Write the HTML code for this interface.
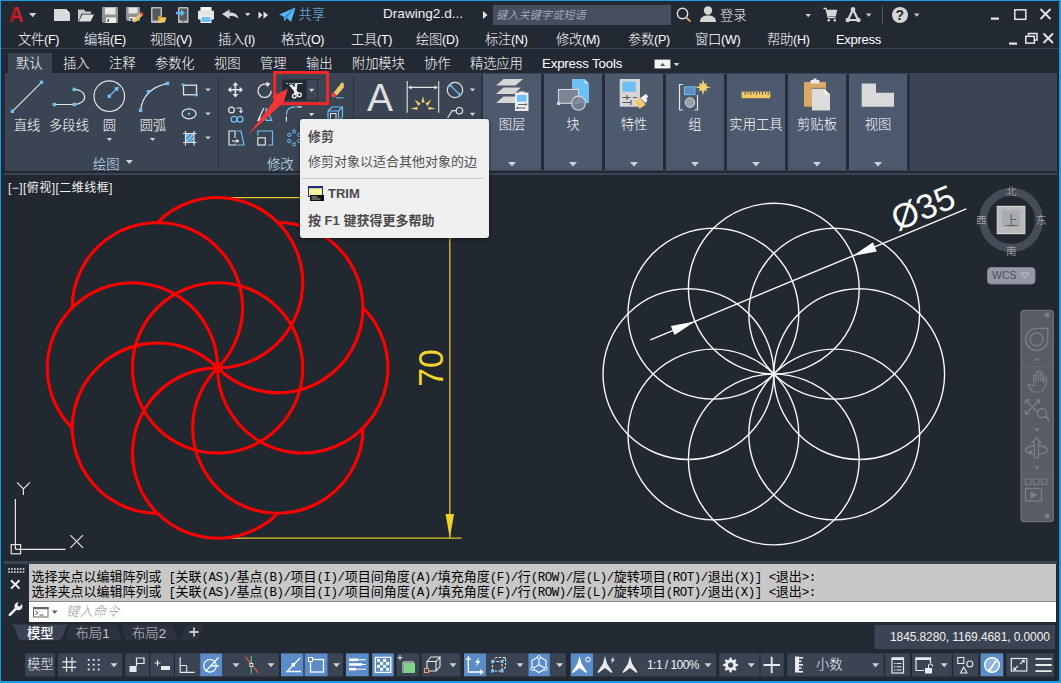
<!DOCTYPE html>
<html lang="zh-CN"><head><meta charset="utf-8"><title>Drawing2.dwg</title>
<style>
*{box-sizing:border-box;margin:0;padding:0}
html,body{width:1061px;height:683px;overflow:hidden;background:#222933}
body{position:relative;font-family:"Liberation Sans","Noto Sans CJK SC",sans-serif;color:#eef0f2;font-size:14px;font-weight:300}
.abs{position:absolute}
.t{position:absolute;white-space:nowrap;line-height:1}
#bord{position:absolute;left:0;top:0;width:1061px;height:683px;border:1px solid #1c9be0;border-right-width:2px;border-bottom-width:2px;z-index:50;pointer-events:none}
svg{position:absolute;left:0;top:0;overflow:visible}
.menu i{font-style:normal;font-size:12.5px}
.menu .t{font-size:13.33px;top:32.5px;color:#fff;font-weight:300;letter-spacing:-0.3px}
.tabs .t{font-size:13.33px;top:57px;color:#fff;letter-spacing:-0.2px;font-weight:300}
.rl{font-size:13.33px;color:#fff}
.cmd{font-size:13px;color:#000;font-weight:400;font-family:"Liberation Mono","Noto Sans CJK SC",monospace}
.cmd i{font-style:normal;font-size:12.5px;letter-spacing:-0.5px}
.pn{position:absolute;top:74px;height:96px;background:#4d596c}
</style></head><body>
<!-- title bar / menu / tabs backgrounds -->
<div class="abs" style="left:0;top:0;width:1061px;height:52px;background:#222933"></div>
<div class="abs" style="left:1px;top:48px;width:1058px;height:1px;background:#3a4352"></div>
<div class="abs" style="left:8px;top:53px;width:44px;height:21px;background:#3b4453"></div>
<!-- title bar -->
<svg width="1061" height="52" viewBox="0 0 1061 52">
<!-- A logo -->
<path d="M9.5 22 L14.5 7 L18.5 7 L23.5 22 L20.3 22 L19 18 L13.6 18.6 L12.5 22 Z M14.6 15.8 L18.2 15.4 L16.5 9.8 Z" fill="#c4232b" fill-rule="evenodd"/>
<path d="M14.5 7 L16 7 L11.5 22 L9.5 22Z" fill="#a0181f"/>
<path d="M29 13 h7.4 l-3.7 4.2z" fill="#d0d2d4"/>
<!-- new -->
<path d="M54 9 h11.5 l4.5 4.5 V21 H54z" fill="#d9d9d9"/><path d="M66 9 l4 4 h-4z" fill="#f4f4f4"/>
<!-- open -->
<path d="M78 21.5 V9.5 h6 l1.5 2 h5.5 v2.2 h-9.5 l-3 7.8z" fill="#c9c9c9"/><path d="M82.3 14.5 H94 l-3.4 7 H79z" fill="#dcdcdc"/>
<!-- save -->
<path d="M102 7 h16 v16 h-14.5 l-1.500 -1.500z" fill="#8f9193"/><rect x="105" y="7.500" width="10.500" height="7" fill="#e6e6e6"/><rect x="106" y="17.500" width="10" height="5.500" fill="#ececec"/><rect x="107.500" y="19" width="1.500" height="3" fill="#555"/>
<!-- save as -->
<path d="M126 7 h14 v14 h-12.500 l-1.500 -1.500z" fill="#8f9193"/><rect x="128.500" y="7.500" width="9" height="6" fill="#e6e6e6"/><rect x="129" y="17" width="8" height="4" fill="#ececec"/><rect x="130" y="18.500" width="2.500" height="2" fill="#444"/>
<path d="M133 22.500 l1 -3.500 l6.500 -6.500 l2.500 2.500 l-6.500 6.500z" fill="#e9c46a"/><path d="M139.500 13.500 l1.800 -1.800 l2.500 2.500 l-1.800 1.800z" fill="#e5484d"/>
<!-- mobile open -->
<rect x="151" y="7" width="11" height="16" rx="1" fill="#b9babb"/><rect x="152.500" y="8.500" width="8" height="12" fill="#55585c"/>
<path d="M158 22.500 v-6.500 h3 l1 1 h4 v1.500 h-5.500z" fill="#c99a2e"/><path d="M160 18 h6.500 l-1.800 4.500 h-6.700z" fill="#f0c55a"/>
<!-- mobile save -->
<rect x="178" y="7" width="10.500" height="16" rx="1" fill="#b9babb"/><rect x="179.500" y="8.500" width="7.500" height="12" fill="#55585c"/><rect x="182" y="21.300" width="2.500" height="1" fill="#555"/>
<path d="M176 11.800 h5 v-2.300 l4 3.500 l-4 3.500 v-2.300 h-5z" fill="#5bb8f5"/>
<!-- print -->
<rect x="200.500" y="7" width="11" height="5" fill="#f2f2f2"/><path d="M198 12 a1.500 1.500 0 0 1 1.500 -1.500 h13 a1.500 1.500 0 0 1 1.500 1.500 v7.500 h-16z" fill="#e4e4e4"/><rect x="200.500" y="15.500" width="11" height="7.500" fill="#f2f2f2"/><rect x="201.500" y="17" width="9" height="5" fill="#6cc0f5"/>
<!-- undo -->
<path d="M222 14 l7.500 -4.500 v3 c5 0 8 1.500 9 6.300 c-2.300 -2.300 -5 -2.800 -9 -2.800 v3z" fill="#d2d3d4"/>
<path d="M245 13 h5.400 l-2.700 3.200z" fill="#d0d2d4"/>
<!-- >> -->
<path d="M258.500 11.500 l4 3.600 l-4 3.600z M263.500 11.500 l4.500 3.600 l-4.500 3.600z" fill="#e4e5e6"/>
<!-- share -->
<path d="M279 14.500 L295.500 7.500 L291 22 L286.500 17.800 L284.500 21.500 L283.800 16.800 Z" fill="#5bb8f5"/><path d="M283.800 16.800 L295.500 7.500 L286.500 17.800 Z" fill="#2b8fd0"/>
<!-- doc arrow -->
<path d="M483 11 l4.500 4 l-4.500 4z" fill="#e8e8e8"/>
<!-- search box -->
<rect x="493" y="5" width="178" height="20" fill="#454f60"/>
<!-- magnifier -->
<circle cx="682.500" cy="13.500" r="5.200" fill="none" stroke="#e0e0e0" stroke-width="1.400"/><path d="M686.300 17.500 l4.200 4.200" stroke="#d9a869" stroke-width="1.800"/>
<!-- user -->
<circle cx="708" cy="10.500" r="4.200" fill="#d6d6d6"/><path d="M700 22 c0 -5 3.500 -6.500 8 -6.500 s8 1.500 8 6.500z" fill="#d6d6d6"/>
<path d="M805.500 14 h5.400 l-2.700 3.200z" fill="#d0d2d4"/>
<!-- cart -->
<path d="M823.500 8.500 h2.500 l2.200 9 h7.300 M827 10.500 h9.500 l-1.200 5 h-7.200z" fill="none" stroke="#d6d6d6" stroke-width="1.300"/><path d="M827.200 10.800 h9 l-1 4.400 h-7z" fill="#d6d6d6"/><circle cx="828.800" cy="20.300" r="1.300" fill="#d6d6d6"/><circle cx="834.800" cy="20.300" r="1.300" fill="#d6d6d6"/>
<!-- A360 -->
<path d="M853 9.500 L848 20 L858.200 20 Z" fill="none" stroke="#d6d6d6" stroke-width="2.200" stroke-linejoin="round"/><circle cx="853" cy="9.200" r="2.300" fill="#d6d6d6"/><circle cx="847.800" cy="20" r="2.300" fill="#d6d6d6"/><circle cx="858.400" cy="20" r="2.300" fill="#d6d6d6"/>
<path d="M866 13.500 h5.400 l-2.700 3.200z" fill="#d0d2d4"/>
<rect x="882" y="6" width="1" height="18" fill="#4b5565"/>
<!-- help -->
<circle cx="900" cy="15" r="8" fill="#d6d6d6"/>
<path d="M914 13.500 h5.400 l-2.700 3.200z" fill="#d0d2d4"/>
<rect x="655" y="60" width="15" height="8" fill="#f2f2f2" stroke="#fff" stroke-width="0.800"/><path d="M660 66 h5.200 l-2.600 -3z" fill="#555"/><path d="M673.700 63 h5.600 l-2.800 3.200z" fill="#d0d2d4"/>
<!-- window controls -->
<rect x="991" y="17.500" width="8" height="2.200" fill="#e6e6e6"/>
<rect x="1014.800" y="9.800" width="11" height="9.500" fill="none" stroke="#e6e6e6" stroke-width="1.500"/>
<path d="M1040.500 9 l10 10 M1050.500 9 l-10 10" stroke="#e6e6e6" stroke-width="1.800"/>
<rect x="1009" y="42.500" width="8" height="2.200" fill="#e6e6e6"/>
<path d="M1028.500 35.500 v-2 h8.500 v6.500 h-2" fill="none" stroke="#e6e6e6" stroke-width="1.500"/><rect x="1025.800" y="36.300" width="8.500" height="6.800" fill="none" stroke="#e6e6e6" stroke-width="1.500"/>
<path d="M1043.500 33.500 l9.500 9.500 M1053 33.500 l-9.500 9.500" stroke="#e6e6e6" stroke-width="1.800"/>
</svg>
<span class="t" style="left:298.500px;top:7.500px;font-size:13.33px;color:#7cc6f6">共享</span>
<span class="t" style="left:383px;top:7px;font-size:13.6px;color:#f0f0f0">Drawing2.d...</span>
<span class="t" style="left:496px;top:9.500px;font-size:11.2px;color:#c4c9d1;font-style:italic">键入关键字或短语</span>
<span class="t" style="left:720px;top:8.500px;font-size:13.33px;color:#f0f0f0">登录</span>
<span class="t" style="left:895.500px;top:8px;font-size:14px;font-weight:bold;color:#222933">?</span>
<!-- menu bar -->
<div class="menu"><span class="t" style="left:18px">文件<i>(F)</i></span><span class="t" style="left:84px">编辑<i>(E)</i></span><span class="t" style="left:150px">视图<i>(V)</i></span><span class="t" style="left:218px">插入<i>(I)</i></span><span class="t" style="left:281px">格式<i>(O)</i></span><span class="t" style="left:351px">工具<i>(T)</i></span><span class="t" style="left:416px">绘图<i>(D)</i></span><span class="t" style="left:485px">标注<i>(N)</i></span><span class="t" style="left:556px">修改<i>(M)</i></span><span class="t" style="left:628px">参数<i>(P)</i></span><span class="t" style="left:695px">窗口<i>(W)</i></span><span class="t" style="left:767px">帮助<i>(H)</i></span><span class="t" style="left:836px;font-size:13px">Express</span></div>
<!-- ribbon tabs -->
<div class="tabs"><span class="t" style="left:16px">默认</span><span class="t" style="left:63px">插入</span><span class="t" style="left:109px">注释</span><span class="t" style="left:155px">参数化</span><span class="t" style="left:214px">视图</span><span class="t" style="left:260px">管理</span><span class="t" style="left:306px">输出</span><span class="t" style="left:352px">附加模块</span><span class="t" style="left:424px">协作</span><span class="t" style="left:470px">精选应用</span><span class="t" style="left:542px">Express Tools</span></div>
<!-- ribbon -->
<div class="abs" style="left:5px;top:73px;width:1052px;height:98px;background:#3b4453"></div>
<div class="abs" style="left:4px;top:173px;width:1053px;height:2px;background:#3b4453"></div>
<!-- ribbon content -->
<div class="pn" style="left:483px;width:58px"></div><span class="t rl" style="left:472px;width:80px;text-align:center;top:118px">图层</span>
<div class="pn" style="left:544px;width:58px"></div><span class="t rl" style="left:533px;width:80px;text-align:center;top:118px">块</span>
<div class="pn" style="left:605px;width:58px"></div><span class="t rl" style="left:594px;width:80px;text-align:center;top:118px">特性</span>
<div class="pn" style="left:666px;width:58px"></div><span class="t rl" style="left:655px;width:80px;text-align:center;top:118px">组</span>
<div class="pn" style="left:727px;width:58px"></div><span class="t rl" style="left:716px;width:80px;text-align:center;top:118px">实用工具</span>
<div class="pn" style="left:788px;width:58px"></div><span class="t rl" style="left:777px;width:80px;text-align:center;top:118px">剪贴板</span>
<div class="pn" style="left:849px;width:58px"></div><span class="t rl" style="left:838px;width:80px;text-align:center;top:118px">视图</span>
<svg width="1061" height="176" viewBox="0 0 1061 176">
<path d="M508.0 162.10000000000002 h8 l-4.0 4.4z" fill="#d0d2d4"/><path d="M569.0 162.10000000000002 h8 l-4.0 4.4z" fill="#d0d2d4"/><path d="M630.0 162.10000000000002 h8 l-4.0 4.4z" fill="#d0d2d4"/><path d="M691.0 162.10000000000002 h8 l-4.0 4.4z" fill="#d0d2d4"/><path d="M752.0 162.10000000000002 h8 l-4.0 4.4z" fill="#d0d2d4"/><path d="M813.0 162.10000000000002 h8 l-4.0 4.4z" fill="#d0d2d4"/><path d="M874.0 162.10000000000002 h8 l-4.0 4.4z" fill="#d0d2d4"/><rect x="218" y="76" width="1" height="93" fill="#2b323d"/><rect x="353" y="76" width="1" height="93" fill="#2b323d"/><rect x="481" y="74" width="2" height="96" fill="#2b323d"/><rect x="541" y="74" width="3" height="96" fill="#262d38"/><rect x="602" y="74" width="3" height="96" fill="#262d38"/><rect x="663" y="74" width="3" height="96" fill="#262d38"/><rect x="724" y="74" width="3" height="96" fill="#262d38"/><rect x="785" y="74" width="3" height="96" fill="#262d38"/><rect x="846" y="74" width="3" height="96" fill="#262d38"/><rect x="907" y="74" width="3" height="96" fill="#262d38"/><path d="M12.4 111.3 L41.5 82.3" stroke="#e2e3e5" stroke-width="1.2"/><rect x="10.7" y="109.6" width="3.4" height="3.4" fill="#6cc0f5"/><rect x="39.8" y="80.6" width="3.4" height="3.4" fill="#6cc0f5"/><path d="M54.3 104.5 H74.2 A10.5 7.55 0 0 0 74.2 89.4" fill="none" stroke="#e2e3e5" stroke-width="1.2"/><rect x="52.6" y="102.8" width="3.4" height="3.4" fill="#6cc0f5"/><rect x="72.5" y="102.8" width="3.4" height="3.4" fill="#6cc0f5"/><rect x="72.5" y="87.7" width="3.4" height="3.4" fill="#6cc0f5"/><circle cx="109.3" cy="96.2" r="15.3" fill="none" stroke="#e2e3e5" stroke-width="1.2"/><rect x="107.6" y="94.5" width="3.4" height="3.4" fill="#6cc0f5"/><path d="M110.500 95 L117 88.500" stroke="#6cc0f5" stroke-width="1.3"/><path d="M119 86.500 l-5.200 1.300 l3.900 3.900z" fill="#6cc0f5"/><path d="M140.6 110.3 Q143 89 167.5 83.4" fill="none" stroke="#e2e3e5" stroke-width="1.2"/><rect x="138.9" y="108.6" width="3.4" height="3.4" fill="#6cc0f5"/><rect x="146.8" y="90.0" width="3.4" height="3.4" fill="#6cc0f5"/><rect x="165.8" y="81.7" width="3.4" height="3.4" fill="#6cc0f5"/><rect x="183.500" y="85.200" width="13" height="9.600" fill="none" stroke="#e2e3e5" stroke-width="1.3"/><rect x="181.7" y="83.5" width="2.6" height="2.6" fill="#6cc0f5"/><rect x="195.3" y="93.7" width="2.6" height="2.6" fill="#6cc0f5"/><path d="M205.3 88.4 h5.4 l-2.7 3.2z" fill="#d0d2d4"/><ellipse cx="189" cy="113.800" rx="7" ry="5" fill="none" stroke="#e2e3e5" stroke-width="1.2"/><rect x="188.0" y="112.8" width="2" height="2" fill="#6cc0f5"/><rect x="195.0" y="112.8" width="2" height="2" fill="#6cc0f5"/><rect x="188.0" y="107.8" width="2" height="2" fill="#6cc0f5"/><path d="M205.3 112.4 h5.4 l-2.7 3.2z" fill="#d0d2d4"/><rect x="185.500" y="133.500" width="8.500" height="9" fill="#6cc0f5"/><path d="M183 133.500 h13.500 M183 142.500 h13.500 M185.500 131 v14.500 M194 131 v14.500" stroke="#e2e3e5" stroke-width="1.2"/><path d="M186 139 l5 -5 M188 142 l6 -6 M191 142.500 l3 -3" stroke="#3b4453" stroke-width="0.700"/><path d="M205.3 136.4 h5.4 l-2.7 3.2z" fill="#d0d2d4"/><path d="M106.7 137.9 h5.6 l-2.8 3.2z" fill="#d0d2d4"/><path d="M149.79999999999998 137.9 h5.6 l-2.8 3.2z" fill="#d0d2d4"/><path d="M125.80000000000001 160.1 h7 l-3.5 3.8z" fill="#d0d2d4"/><path d="M235.400 82 l3 3.500 h-2.200 v3.400 h3.400 v-2.200 l3.500 3 l-3.500 3 v-2.200 h-3.400 v3.400 h2.200 l-3 3.500 l-3 -3.500 h2.200 v-3.400 h-3.400 v2.200 l-3.500 -3 l3.500 -3 v2.200 h3.400 v-3.400 h-2.200z" fill="#e2e3e5"/><path d="M268.500 85.500 A6.600 6.600 0 1 0 271.200 90.700" fill="none" stroke="#e2e3e5" stroke-width="1.300"/><path d="M265.800 82 l4.800 1.600 l-3.600 3.600z" fill="#e2e3e5"/><rect x="282" y="79.500" width="24" height="21" fill="#222933"/><rect x="306.300" y="79.600" width="11.200" height="20.600" fill="#3d4655" stroke="#2a313c" stroke-width="1"/><rect x="305.600" y="79.500" width="0.800" height="21" fill="#262d38"/><path d="M286 83.500 h2 M289 83.500 h2 M292 83.500 h2" stroke="#6cc0f5" stroke-width="1"/><path d="M296.500 83.500 h6" stroke="#e2e3e5" stroke-width="1"/><path d="M289.200 85.200 L291.800 84.300 L298.800 93.200 L297 94.800Z M294.800 83.300 L297.400 83.600 L296.300 94 L294 94Z" fill="#f6f6f6"/><circle cx="294.300" cy="96" r="1.900" fill="none" stroke="#f6f6f6" stroke-width="1.300"/><circle cx="299.400" cy="94.700" r="1.900" fill="none" stroke="#f6f6f6" stroke-width="1.300"/><path d="M308.90000000000003 88.7 h5.4 l-2.7 3.2z" fill="#d0d2d4"/><path d="M333.500 93 l8.300 -10.700 l2 1.300 v4 l-7 8z" fill="#f0c866"/><path d="M331.200 95.800 q-0.500 -2 2.300 -3.500 l3.300 3 q-1.500 2.500 -4 2z" fill="#e5484d"/><path d="M336 97.800 h7.500" stroke="#6cc0f5" stroke-width="1"/><circle cx="231.500" cy="110" r="2.900" fill="none" stroke="#e2e3e5" stroke-width="1.200"/><circle cx="234" cy="119.200" r="2.900" fill="none" stroke="#6cc0f5" stroke-width="1.200"/><circle cx="240" cy="119.200" r="2.900" fill="none" stroke="#6cc0f5" stroke-width="1.200"/><path d="M236.500 108 h4.500 v3" fill="none" stroke="#e2e3e5" stroke-width="1.200"/><path d="M238.800 110.800 h4.400 l-2.200 2.600z" fill="#e2e3e5"/><path d="M263.800 108 L258 120.400 H263.800" fill="none" stroke="#e2e3e5" stroke-width="1.200"/><path d="M266 108 L271.800 120.400 H266z" fill="none" stroke="#6cc0f5" stroke-width="1.200"/><path d="M260.500 116 l-3 4.500 h3z" fill="#e2e3e5"/><path d="M286.400 115 Q286.400 106.900 295.300 106.900" fill="none" stroke="#6cc0f5" stroke-width="1.300"/><path d="M286.400 116.500 v5 M296.800 106.900 h5" stroke="#e2e3e5" stroke-width="1.200"/><path d="M308.90000000000003 113.0 h5.4 l-2.7 3.2z" fill="#d0d2d4"/><path d="M328 111 h10.500 v10 M328 111 v10 M328 111 l4 -4 h10.500 v10 l-4 4 M338.500 111 l4 -4" fill="none" stroke="#6cc0f5" stroke-width="1.200"/><rect x="330.500" y="113.500" width="5.500" height="7.500" fill="none" stroke="#e2e3e5" stroke-width="1"/><path d="M235 138 V131 H229 V145 H235 V143.500" fill="none" stroke="#e2e3e5" stroke-width="1.200"/><path d="M236.500 131 H241 L244 145 H236.500" fill="none" stroke="#6cc0f5" stroke-width="1.200"/><path d="M232 141 h5" stroke="#e2e3e5" stroke-width="1.200"/><path d="M236.500 138.800 l3 2.200 l-3 2.200z" fill="#e2e3e5"/><path d="M257.800 135.500 V131 H272.500 V145 H268" fill="none" stroke="#6cc0f5" stroke-width="1.200"/><rect x="257.800" y="137.800" width="7.500" height="7.200" fill="none" stroke="#e2e3e5" stroke-width="1.200"/><circle cx="294" cy="131.5" r="1.600" fill="none" stroke="#6cc0f5" stroke-width="1"/><circle cx="289.2" cy="134.9" r="1.600" fill="none" stroke="#6cc0f5" stroke-width="1"/><circle cx="299.1" cy="134.9" r="1.600" fill="none" stroke="#6cc0f5" stroke-width="1"/><circle cx="289.2" cy="141" r="1.600" fill="none" stroke="#6cc0f5" stroke-width="1"/><circle cx="299.1" cy="141" r="1.600" fill="none" stroke="#6cc0f5" stroke-width="1"/><circle cx="294" cy="144.3" r="1.600" fill="none" stroke="#6cc0f5" stroke-width="1"/><path d="M407.200 81 V112.700 M438.700 81 V112.700 M409 87.400 H437" stroke="#e2e3e5" stroke-width="1.100"/><path d="M408 87.400 l3.500 -2 v4z M438 87.400 l-3.500 -2 v4z" fill="#e2e3e5"/><path d="M423 96 l1.600 6.500 h-3.200z M414.500 99.500 l6 4 l-2 2.400z M431.500 99.500 l-6 4 l2 2.400z M410.500 108.800 l7 -2 v3z M435.500 108.800 l-7 -2 v3z" fill="#f5d070"/><circle cx="455" cy="90" r="7.700" fill="none" stroke="#e2e3e5" stroke-width="1.200"/><path d="M450.500 85.500 L459.500 94.500" stroke="#6cc0f5" stroke-width="1.200"/><path d="M449.300 84.300 l3.200 0.800 l-2.400 2.400z M460.700 95.700 l-3.200 -0.800 l2.400 -2.400z" fill="#6cc0f5"/><path d="M469.8 88.4 h5.4 l-2.7 3.2z" fill="#d0d2d4"/><circle cx="459.400" cy="110.700" r="3.200" fill="none" stroke="#e2e3e5" stroke-width="1.200"/><path d="M456.200 110.700 H452.200 L447.600 118" fill="none" stroke="#e2e3e5" stroke-width="1.200"/><path d="M469.8 112.7 h5.4 l-2.7 3.2z" fill="#d0d2d4"/>
<!-- collapsed panel icons -->
<path d="M496 85.500 L503.500 79 H523 L515.500 85.500z" fill="#d6d6d6"/><path d="M496 94 L503.500 87.500 H521 L514 94z" fill="#d6d6d6"/><path d="M496 103 L503.500 96.500 H516 V103z" fill="#d6d6d6"/><rect x="515" y="92.500" width="13.500" height="18.500" fill="#ececec"/><rect x="519" y="91.500" width="5.500" height="1.500" fill="#ececec"/><rect x="517" y="95" width="9.500" height="6.500" fill="#6cc0f5"/><path d="M518 104.500 h7.500 M518 108 h7.500" stroke="#555" stroke-width="0.900"/><path d="M525.500 103 l2 1.500 l-2 1.500z M518 106.500 l-2 1.500 l2 1.500z" fill="#555"/><path d="M572 79 H584.500 L589 83.500 V103 H572z" fill="#6cc0f5"/><path d="M584.500 79 l4.500 4.500 h-4.500z" fill="#bfe3fa"/><rect x="558.500" y="89.500" width="20" height="13.800" fill="#7b8494" stroke="#d6d6d6" stroke-width="1.100"/><circle cx="578.500" cy="103.100" r="7" fill="#7b8494" fill-opacity="0.85" stroke="#d6d6d6" stroke-width="1.100"/><rect x="557" y="102" width="3" height="3" fill="#d6d6d6"/><rect x="619.700" y="79" width="20.300" height="27.700" fill="#d6d6d6"/><rect x="622.400" y="81.600" width="13.400" height="10" fill="#6cc0f5"/><path d="M622.500 97.500 h8 M622.500 102.500 h8 M633 97.500 h4 M627 95 v5 M631 100 v5" stroke="#555" stroke-width="1.100"/><path d="M634.500 101.500 l6 -3.800 l5 7.200 l-6 3.800z" fill="#f0c866"/><path d="M640.500 97.700 l2.500 -1.500 l1 -1 l2 -1.500 l2.200 3 l-1.800 1.800 l1 1.800 l-2 3z" fill="#f4f4f4"/><path d="M683 84.500 H679.500 V110 H683 M697.500 95 V110 H694.500" fill="none" stroke="#e6e6e6" stroke-width="1.200"/><rect x="684.500" y="86.800" width="10.500" height="7.800" fill="#5b8fbf" stroke="#6cc0f5" stroke-width="1"/><circle cx="689.900" cy="102.600" r="4.800" fill="#9aa0a8" stroke="#d6d6d6" stroke-width="1"/><polygon points="703.0,79.2 704.3,84.1 707.2,83.0 706.1,85.9 711.0,87.2 706.1,88.5 707.2,91.4 704.3,90.3 703.0,95.2 701.7,90.3 698.8,91.4 699.9,88.5 695.0,87.2 699.9,85.9 698.8,83.0 701.7,84.1" fill="#f5d070"/><rect x="741.600" y="91.600" width="28.700" height="6.600" fill="#f0c866"/><rect x="744.5" y="91.600" width="1" height="3.2" fill="#4a5568"/><rect x="747.4" y="91.600" width="1" height="2.2" fill="#4a5568"/><rect x="750.3" y="91.600" width="1" height="3.2" fill="#4a5568"/><rect x="753.2" y="91.600" width="1" height="2.2" fill="#4a5568"/><rect x="756.1" y="91.600" width="1" height="3.2" fill="#4a5568"/><rect x="759.0" y="91.600" width="1" height="2.2" fill="#4a5568"/><rect x="761.9" y="91.600" width="1" height="3.2" fill="#4a5568"/><rect x="764.8" y="91.600" width="1" height="2.2" fill="#4a5568"/><rect x="767.7" y="91.600" width="1" height="3.2" fill="#4a5568"/><rect x="804" y="82" width="22" height="24.800" rx="1" fill="#dba96a"/><rect x="810.500" y="80" width="9" height="3.500" rx="1" fill="#ececec"/><rect x="813.500" y="78.500" width="3" height="2.500" fill="#ececec"/><path d="M812 89 H824.500 L830 94.500 V110.400 H812z" fill="#dcdcdc"/><path d="M824.500 89 l5.500 5.500 h-5.500z" fill="#f6f6f6"/><path d="M811.300 88.300 H825 L830.700 94" fill="none" stroke="#4a5568" stroke-width="0.600"/><path d="M861.700 83.500 H876 V92.800 H894 V106.800 H861.700z" fill="#d9d9d9"/></svg>
<span class="t" style="left:367px;top:77.500px;font-size:39px;color:#dedede;font-weight:400">A</span>
<span class="t rl" style="left:-13px;width:80px;text-align:center;top:119px">直线</span><span class="t rl" style="left:29px;width:80px;text-align:center;top:119px">多段线</span><span class="t rl" style="left:69.3px;width:80px;text-align:center;top:119px">圆</span><span class="t rl" style="left:113px;width:80px;text-align:center;top:119px">圆弧</span><span class="t rl" style="left:93px;top:158px;color:#cfe6f8">绘图</span><span class="t rl" style="left:267px;top:157.500px;color:#cfe6f8">修改</span>
<svg width="1061" height="176" viewBox="0 0 1061 176" style="z-index:5"><rect x="274.700" y="72.500" width="52.900" height="31.100" fill="none" stroke="#f02828" stroke-width="3"/><path d="M248.400 134.500 L275.500 99 L272.200 96.500 L288 88.600 L282.400 105.800 L281.200 104.600 Z" fill="#f43636"/></svg>
<!-- drawing area -->
<div class="abs" style="left:4px;top:175px;width:1053px;height:387px;background:#212830"></div>

<svg width="1061" height="683" viewBox="0 0 1061 683">
<path d="M223 197.600 H462 M223 538.200 H461.500 M449.800 197.600 V538" stroke="#e2c22a" stroke-width="1.300" fill="none"/><path d="M449.800 538.200 L445.600 514 H454 Z" fill="#f0d22e"/><text transform="translate(442.700 368.100) rotate(-90)" text-anchor="middle" font-family="Liberation Sans,sans-serif" font-size="35.500" fill="#f2d42e" textLength="37.400" lengthAdjust="spacingAndGlyphs">70</text>
<path d="M157.4 222.5A85.15 85.15 0 1 1 217.6 367.9M277.8 222.5A85.15 85.15 0 1 1 217.6 367.9M363.0 307.7A85.15 85.15 0 1 1 217.6 367.9M363.0 428.1A85.15 85.15 0 1 1 217.6 367.9M277.8 513.3A85.15 85.15 0 1 1 217.6 367.9M157.4 513.3A85.15 85.15 0 1 1 217.6 367.9M72.2 428.1A85.15 85.15 0 1 1 217.6 367.9M72.2 307.7A85.15 85.15 0 1 1 217.6 367.9" fill="none" stroke="#ff0000" stroke-width="3.100" stroke-linecap="round"/><circle cx="217.6" cy="367.9" r="85.15" fill="none" stroke="#ff0000" stroke-width="3.100"/>
<g fill="none" stroke="#f8f8f8" stroke-width="1.400"><circle cx="773.8" cy="288.7" r="85.4"/><circle cx="834.2" cy="313.7" r="85.4"/><circle cx="859.2" cy="374.1" r="85.4"/><circle cx="834.2" cy="434.5" r="85.4"/><circle cx="773.8" cy="459.5" r="85.4"/><circle cx="713.4" cy="434.5" r="85.4"/><circle cx="688.4" cy="374.1" r="85.4"/><circle cx="713.4" cy="313.7" r="85.4"/></g>
<path d="M650.4 339.8 L966.3 208.9" stroke="#f8f8f8" stroke-width="1.400"/><path d="M694.9 321.4 L674.6 335.1 L670.9 326.0Z" fill="#ffffff"/><path d="M852.7 256.0 L876.7 251.4 L873.0 242.3Z" fill="#ffffff"/><text transform="translate(927.6 218.7) rotate(-22.500)" text-anchor="middle" font-family="Liberation Sans,sans-serif" font-size="34.500" fill="#ffffff">Ø35</text>
<path d="M15.400 549.300 V499 M15.400 549.300 H65.600" stroke="#e6e6e6" stroke-width="1.200" fill="none"/><rect x="11.200" y="544.600" width="9.400" height="9.200" fill="none" stroke="#e6e6e6" stroke-width="1.200"/><path d="M70.300 535.200 L83 547.900 M83 535.200 L70.300 547.900" stroke="#e6e6e6" stroke-width="1.200"/><path d="M17 482.300 L23.400 488.800 L29.900 482.300 M23.400 488.800 V495" stroke="#e6e6e6" stroke-width="1.200" fill="none"/>
<circle cx="1011.200" cy="220" r="28" fill="none" stroke="#454c57" stroke-width="8"/><rect x="997.300" y="206.400" width="27.500" height="27.200" fill="#b9b9b9" stroke="#d2d2d2" stroke-width="1.200"/><rect x="1002" y="210.500" width="18" height="16.500" fill="#a7acb3"/><rect x="987.500" y="267.500" width="47.500" height="16.500" rx="3.500" fill="#9698a8" stroke="#7d8092" stroke-width="1"/><path d="M1021 273 h8 l-4 5z" fill="none" stroke="#bfc1cc" stroke-width="1"/><rect x="1021" y="310.300" width="32.300" height="211.400" rx="3" fill="#585c65" stroke="#6d7079" stroke-width="1.200"/><circle cx="1047" cy="315" r="2.500" fill="#7b7f88"/><circle cx="1047" cy="516" r="2.500" fill="#7b7f88"/><path d="M1025.700 339.400 a11 11 0 0 1 11 -11 h11 v11 a11 11 0 1 1 -22 0z" fill="none" stroke="#7b7f88" stroke-width="1.300"/><circle cx="1036.700" cy="339.400" r="6.500" fill="none" stroke="#7b7f88" stroke-width="1.300"/><path d="M1034.500 358.500 h5 l-2.500 3z M1034.500 428.500 h5 l-2.500 3z M1034.500 466.500 h5 l-2.500 3z" fill="#7b7f88"/><path d="M1022 366.500 h30 M1022 473.500 h30" stroke="#62666f" stroke-width="1"/><path d="M1028 384 q2 6 5 8 h9 q4 -5 5 -14 l-2 -1 l-2 6 v-10 h-2 v8 v-10 h-2.500 v10 v-9 h-2.500 v10 v-6 l-2 -1 v11z" fill="none" stroke="#7b7f88" stroke-width="1.200"/><path d="M1025.500 400 l14 14 M1039.500 400 l-14 14 M1025.500 404 v-4 h4 M1035.500 400 h4 v4 M1025.500 410 v4 h4" stroke="#7b7f88" stroke-width="1.300" fill="none"/><circle cx="1042" cy="413" r="4.500" fill="#585c65" stroke="#7b7f88" stroke-width="1.300"/><path d="M1045.500 416.500 l3.500 3.500" stroke="#7b7f88" stroke-width="2"/><ellipse cx="1036.500" cy="450" rx="11" ry="4.500" fill="none" stroke="#7b7f88" stroke-width="1.300"/><path d="M1034.500 458 v-15 h-2.500 l4.500 -5.500 l4.500 5.500 h-2.500 v15z" fill="#585c65" stroke="#7b7f88" stroke-width="1.200"/><path d="M1028 452 l4.500 -2.500 v5z" fill="#7b7f88"/><rect x="1025.500" y="479" width="5.500" height="5.500" fill="none" stroke="#7b7f88" stroke-width="1"/><rect x="1033.500" y="479" width="5.500" height="5.500" fill="none" stroke="#7b7f88" stroke-width="1"/><rect x="1041.500" y="479" width="5.500" height="5.500" fill="none" stroke="#7b7f88" stroke-width="1"/><rect x="1025.500" y="488.500" width="16" height="12.500" fill="none" stroke="#7b7f88" stroke-width="1.200"/><path d="M1030.500 491 l7 4 l-7 4z" fill="#7b7f88"/></svg>
<span class="t" id="vp" style="left:8px;top:182px;font-size:12px;color:#f0f0f0;font-weight:400;letter-spacing:0.45px">[−][俯视][二维线框]</span>
<span class="t" style="left:1006px;top:185.5px;font-size:10.500px;color:#c4c6c8">北</span><span class="t" style="left:1006px;top:246px;font-size:10.500px;color:#c4c6c8">南</span><span class="t" style="left:976px;top:215px;font-size:10.500px;color:#c4c6c8">西</span><span class="t" style="left:1036px;top:215px;font-size:10.500px;color:#c4c6c8">东</span><span class="t" style="left:1005px;top:213.500px;font-size:13px;color:#5d626a;font-weight:400">上</span><span class="t" style="left:992px;top:270px;font-size:10.500px;color:#4c4f5c;font-weight:400">WCS</span>
<div class="abs" style="left:300px;top:118.500px;width:189px;height:119px;background:#efefef;border-radius:3px;box-shadow:0 1px 4px rgba(0,0,0,.45);z-index:10">
<span class="t" style="left:8px;top:11px;font-size:13px;font-weight:bold;color:#4a4a4a">修剪</span>
<span class="t" style="left:8px;top:36px;font-size:13px;color:#505050;font-weight:400">修剪对象以适合其他对象的边</span>
<div class="abs" style="left:2px;top:59.500px;width:181px;height:1px;background:#c6c6c6"></div>
<svg width="189" height="119" viewBox="0 0 189 119"><rect x="8.500" y="67.500" width="14" height="10" fill="#f4f29a" stroke="#1e2d8c" stroke-width="1"/><rect x="8" y="67" width="15" height="2.200" fill="#1e2d8c"/><rect x="10" y="76" width="14" height="6" fill="#111"/><path d="M11.500 78 h6 M11.500 80 h9" stroke="#ddd" stroke-width="0.800"/></svg>
<span class="t" style="left:28px;top:68.500px;font-size:13px;font-weight:bold;color:#4a4a4a">TRIM</span>
<span class="t" style="left:8px;top:95px;font-size:13px;font-weight:bold;color:#4a4a4a">按 F1 键获得更多帮助</span>
</div>
<!-- command line -->
<div class="abs" style="left:4px;top:561px;width:1053px;height:3px;background:#3b4453"></div><div class="abs" style="left:4px;top:564px;width:25px;height:58px;background:#232a34"></div><div class="abs" style="left:29px;top:564px;width:1027px;height:38px;background:#c8c8c8"></div><div class="abs" style="left:29px;top:601px;width:1027px;height:1px;background:#8a8a8a"></div><div class="abs" style="left:29px;top:602px;width:1027px;height:20px;background:#ffffff"></div>
<span class="t cmd" style="left:31.500px;top:571px">选择夹点以编辑阵列或<i> [</i>关联<i>(AS)/</i>基点<i>(B)/</i>项目<i>(I)/</i>项目间角度<i>(A)/</i>填充角度<i>(F)/</i>行<i>(ROW)/</i>层<i>(L)/</i>旋转项目<i>(ROT)/</i>退出<i>(X)] &lt;</i>退出<i>&gt;:</i></span>
<span class="t cmd" style="left:31.500px;top:585.5px">选择夹点以编辑阵列或<i> [</i>关联<i>(AS)/</i>基点<i>(B)/</i>项目<i>(I)/</i>项目间角度<i>(A)/</i>填充角度<i>(F)/</i>行<i>(ROW)/</i>层<i>(L)/</i>旋转项目<i>(ROT)/</i>退出<i>(X)] &lt;</i>退出<i>&gt;:</i></span>
<span class="t" style="left:66px;top:605px;font-size:13.33px;font-style:italic;color:#9b9b9b">键入命令</span>
<svg width="1061" height="683" viewBox="0 0 1061 683"><path d="M11 624.500 H69.500 C64 626 64.500 640.300 58 640.300 H22 C16 640.300 17 626 11 624.500Z" fill="#3b4453"/><path d="M70 624.500 H116 C119 626 119 640.300 124 640.300 H64.500 C68 638 67 627 70 624.500Z" fill="#2b323d"/><path d="M123 624.500 H172 C175 626 175 640.300 180 640.300 H126 C123 638 124 627 121 624.500Z" fill="#2b323d"/><path d="M188 624.500 H204.500 C201 628 202 640.300 195 640.300 H178 C184 638 183 627 188 624.500Z" fill="#2b323d"/><path d="M189.500 632 h9 M194 627.500 v9" stroke="#c8cacc" stroke-width="1.800"/><rect x="8.2" y="568.200" width="1.600" height="1.600" fill="#e8e8e8"/><rect x="8.2" y="571.200" width="1.600" height="1.600" fill="#e8e8e8"/><rect x="11.1" y="568.200" width="1.600" height="1.600" fill="#e8e8e8"/><rect x="11.1" y="571.200" width="1.600" height="1.600" fill="#e8e8e8"/><rect x="14.0" y="568.200" width="1.600" height="1.600" fill="#e8e8e8"/><rect x="14.0" y="571.200" width="1.600" height="1.600" fill="#e8e8e8"/><rect x="16.9" y="568.200" width="1.600" height="1.600" fill="#e8e8e8"/><rect x="16.9" y="571.200" width="1.600" height="1.600" fill="#e8e8e8"/><rect x="19.8" y="568.200" width="1.600" height="1.600" fill="#e8e8e8"/><rect x="19.8" y="571.200" width="1.600" height="1.600" fill="#e8e8e8"/><rect x="22.7" y="568.200" width="1.600" height="1.600" fill="#e8e8e8"/><rect x="22.7" y="571.200" width="1.600" height="1.600" fill="#e8e8e8"/><path d="M11 580.300 l8.500 8.300 M19.500 580.300 l-8.500 8.300" stroke="#f0f0f0" stroke-width="2"/><path d="M9.800 614.800 L17 607.600" stroke="#f0f0f0" stroke-width="2.600" stroke-linecap="round"/><path d="M21.800 604 a4 4 0 1 1 -3.200 -1.800 l-1.300 3 l2.200 1.500z" fill="#f0f0f0"/><rect x="33.500" y="607.500" width="14.500" height="9.500" fill="#fff" stroke="#666" stroke-width="1"/><rect x="33" y="607" width="15.500" height="2.200" fill="#666"/><path d="M35.500 611 l2.500 1.800 l-2.500 1.800 M39.500 615 h4" stroke="#444" stroke-width="0.900" fill="none"/><path d="M51.7 610.5 h6 l-3.0 3.6z" fill="#666"/><rect x="874.500" y="625" width="180.500" height="24" fill="#3b4453"/><rect x="25" y="653.300" width="1029" height="23.200" fill="#3b4453"/><rect x="54.7" y="653" width="3.3" height="24" fill="#222933"/><rect x="122.2" y="653" width="3" height="24" fill="#222933"/><rect x="149" y="653" width="1.2" height="24" fill="#222933"/><rect x="173.8" y="653" width="1.2" height="24" fill="#222933"/><rect x="279" y="653" width="2" height="24" fill="#222933"/><rect x="343" y="653" width="2.8" height="24" fill="#222933"/><rect x="369" y="653" width="3" height="24" fill="#222933"/><rect x="394" y="653" width="2.5" height="24" fill="#222933"/><rect x="419.5" y="653" width="2" height="24" fill="#222933"/><rect x="460.5" y="653" width="3.5" height="24" fill="#222933"/><rect x="566" y="653" width="4.5" height="24" fill="#222933"/><rect x="716" y="653" width="3.3" height="24" fill="#222933"/><rect x="759.5" y="653" width="1" height="24" fill="#222933"/><rect x="783.8" y="653" width="3.4" height="24" fill="#222933"/><rect x="883.8" y="653" width="1.4" height="24" fill="#222933"/><rect x="910" y="653" width="2" height="24" fill="#222933"/><rect x="951.8" y="653" width="1.4" height="24" fill="#222933"/><rect x="978.5" y="653" width="2" height="24" fill="#222933"/><rect x="1003.2" y="653" width="3.2" height="24" fill="#222933"/><rect x="200.3" y="653.500" width="21.7" height="22.700" fill="#5a8cc8"/><rect x="281" y="653.500" width="22.2" height="22.700" fill="#5a8cc8"/><rect x="304.8" y="653.500" width="22.7" height="22.700" fill="#5a8cc8"/><rect x="346" y="653.500" width="22.6" height="22.700" fill="#5a8cc8"/><rect x="372.2" y="653.500" width="21.4" height="22.700" fill="#5a8cc8"/><rect x="464" y="653.500" width="22.0" height="22.700" fill="#5a8cc8"/><rect x="528.5" y="653.500" width="21.3" height="22.700" fill="#5a8cc8"/><rect x="570.8" y="653.500" width="22.2" height="22.700" fill="#5a8cc8"/><rect x="980.6" y="653.500" width="22.6" height="22.700" fill="#5a8cc8"/><path d="M110.5 663.3 h7 l-3.5 4z" fill="#d0d2d4"/><path d="M232.5 663.3 h7 l-3.5 4z" fill="#d0d2d4"/><path d="M267.5 663.3 h7 l-3.5 4z" fill="#d0d2d4"/><path d="M333.0 663.3 h7 l-3.5 4z" fill="#d0d2d4"/><path d="M449.5 663.3 h7 l-3.5 4z" fill="#d0d2d4"/><path d="M516.5 663.3 h7 l-3.5 4z" fill="#d0d2d4"/><path d="M556.1 663.3 h7 l-3.5 4z" fill="#d0d2d4"/><path d="M704.5 663.3 h7 l-3.5 4z" fill="#d0d2d4"/><path d="M747.8 663.3 h7 l-3.5 4z" fill="#d0d2d4"/><path d="M872.1 663.3 h7 l-3.5 4z" fill="#d0d2d4"/><path d="M940.7 663.3 h7 l-3.5 4z" fill="#d0d2d4"/></svg>
<span class="t" style="left:27px;top:627px;font-size:13.33px;color:#ffffff;font-weight:500">模型</span><span class="t" style="left:75.500px;top:627px;font-size:13.33px;color:#c3c7cb">布局1</span><span class="t" style="left:132px;top:627px;font-size:13.33px;color:#c3c7cb">布局2</span>
<span class="t" style="left:890px;top:630.500px;font-size:12px;color:#f2f2f2;letter-spacing:-0.1px">1845.8280, 1169.4681, 0.0000</span>
<span class="t" style="left:27px;top:658px;font-size:13.33px;color:#f2f2f2">模型</span><span class="t" style="left:647px;top:658.500px;font-size:12px;color:#f2f2f2;letter-spacing:-0.55px">1:1 / 100%</span><span class="t" style="left:816px;top:658px;font-size:13.33px;color:#f2f2f2">小数</span>
<!-- status icons -->
<svg width="1061" height="683" viewBox="0 0 1061 683"><path d="M66.500 657.300 v14.500 M72 657.300 v14.500 M62.300 661.800 h14 M62.300 667.300 h14" stroke="#e9eaeb" stroke-width="1.200"/><rect x="87.8" y="659.0" width="1.800" height="1.800" fill="#e9eaeb"/><rect x="87.8" y="663.8" width="1.800" height="1.800" fill="#e9eaeb"/><rect x="87.8" y="668.6" width="1.800" height="1.800" fill="#e9eaeb"/><rect x="92.8" y="659.0" width="1.800" height="1.800" fill="#e9eaeb"/><rect x="92.8" y="663.8" width="1.800" height="1.800" fill="#e9eaeb"/><rect x="92.8" y="668.6" width="1.800" height="1.800" fill="#e9eaeb"/><rect x="97.8" y="659.0" width="1.800" height="1.800" fill="#e9eaeb"/><rect x="97.8" y="663.8" width="1.800" height="1.800" fill="#e9eaeb"/><rect x="97.8" y="668.6" width="1.800" height="1.800" fill="#e9eaeb"/><rect x="129.500" y="666" width="7" height="6" fill="#e9eaeb"/><path d="M136.500 666 v-8 h7.500 v5.500 h-7.500" fill="none" stroke="#e9eaeb" stroke-width="1.200"/><path d="M154.500 663 h6 M157.500 660 v6" stroke="#e9eaeb" stroke-width="1.100"/><rect x="161" y="666" width="9" height="4" fill="#e9eaeb"/><path d="M180.200 657.300 V672.300 H194.700" fill="none" stroke="#e9eaeb" stroke-width="1.200"/><path d="M180.200 665.500 h6.500 v6.800" fill="none" stroke="#e9eaeb" stroke-width="1"/><circle cx="210" cy="665.800" r="6.300" fill="none" stroke="#fff" stroke-width="1.200"/><path d="M210 665.800 h9 M205.500 671.500 L218.500 657.500" stroke="#fff" stroke-width="1.200"/><path d="M245.500 657 L258.500 673" stroke="#e05555" stroke-width="1.200"/><path d="M251.300 656 V674" stroke="#52c46a" stroke-width="1.200"/><rect x="249.800" y="663.500" width="3" height="3" fill="#3b4453" stroke="#fff" stroke-width="0.800"/><path d="M301 671.500 H287 L300 658" fill="none" stroke="#fff" stroke-width="1.300"/><rect x="291.500" y="663" width="3.500" height="3.500" fill="#fff"/><rect x="310.500" y="659.500" width="13" height="12.500" fill="none" stroke="#fff" stroke-width="1.300"/><rect x="308.500" y="657.500" width="4" height="4" fill="#5a8cc8" stroke="#fff" stroke-width="1"/><path d="M349 659.800 h17 M349 664.500 h17 M349 669.200 h17" stroke="#fff" stroke-width="1.100"/><rect x="349" y="658.500" width="9" height="2.600" fill="#fff"/><rect x="349" y="663.200" width="13" height="2.600" fill="#fff"/><rect x="349" y="667.900" width="7" height="2.600" fill="#fff"/><rect x="375.300" y="657.400" width="15.500" height="15" fill="none" stroke="#fff" stroke-width="1.300"/><rect x="377.00" y="659.00" width="3.050" height="2.950" fill="#fff"/><rect x="377.00" y="664.90" width="3.050" height="2.950" fill="#fff"/><rect x="380.05" y="661.95" width="3.050" height="2.950" fill="#fff"/><rect x="380.05" y="667.85" width="3.050" height="2.950" fill="#fff"/><rect x="383.10" y="659.00" width="3.050" height="2.950" fill="#fff"/><rect x="383.10" y="664.90" width="3.050" height="2.950" fill="#fff"/><rect x="386.15" y="661.95" width="3.050" height="2.950" fill="#fff"/><rect x="386.15" y="667.85" width="3.050" height="2.950" fill="#fff"/><rect x="404" y="663" width="11" height="10" fill="#7ed08a"/><path d="M403 673 V662 H414" fill="none" stroke="#e9eaeb" stroke-width="1"/><path d="M397.500 657.700 h5 M400 655.200 v5" stroke="#e9eaeb" stroke-width="1"/><path d="M427 661.500 h9 v9.500 h-9z M427 661.500 l4 -4.500 h9 l-4 4.500 M440 657 v9.500 l-4 4.500" fill="none" stroke="#e9eaeb" stroke-width="1.100"/><rect x="424.500" y="668.500" width="4" height="4" fill="#3b4453" stroke="#f0a060" stroke-width="1"/><path d="M468.300 659 V672 H481" fill="none" stroke="#fff" stroke-width="1.400"/><path d="M468.300 656 l-2.800 4 h5.600z M484 672 l-4 -2.800 v5.600z" fill="#fff"/><path d="M479 657.500 l-4 5 h2.500 l-1.500 4 l4.500 -5.500 h-2.500z" fill="#fff"/><path d="M492.500 661.500 h9.500 v9.500 h-9.500z M492.500 661.500 l3.500 -4 h9.500 v9.500 l-3.500 4 M502 661.500 l3.500 -4" fill="none" stroke="#e9eaeb" stroke-width="1.100" stroke-dasharray="2.500 1.500"/><rect x="491.0" y="660.0" width="3" height="3" fill="#6cc0f5"/><rect x="500.5" y="660.0" width="3" height="3" fill="#6cc0f5"/><rect x="491.0" y="669.5" width="3" height="3" fill="#6cc0f5"/><rect x="500.5" y="669.5" width="3" height="3" fill="#6cc0f5"/><path d="M539 656.500 l7 4 v8 l-7 4 l-7 -4 v-8z M539 664.800 v-6 M539 664.800 l6 3.500 M539 664.800 l-6 3.500" fill="none" stroke="#fff" stroke-width="1.100"/><circle cx="539" cy="657.200" r="1.600" fill="#5a8cc8" stroke="#fff" stroke-width="0.900"/><circle cx="545.600" cy="669" r="1.600" fill="#5a8cc8" stroke="#fff" stroke-width="0.900"/><circle cx="532.400" cy="669" r="1.600" fill="#5a8cc8" stroke="#fff" stroke-width="0.900"/><path d="M579.5 656 l2 7.500 l5.500 8.500 l-1 1 l-6.500 -5 l-6.500 5 l-1 -1 l5.500 -8.500z" fill="#fff"/><circle cx="588" cy="659.500" r="2.300" fill="none" stroke="#fff" stroke-width="1"/><path d="M605 656 l2 7.500 l5.500 8.500 l-1 1 l-6.500 -5 l-6.500 5 l-1 -1 l5.500 -8.500z" fill="#e9eaeb"/><path d="M614 656.500 l-3.500 4 h2 l-1.500 3.500 l4 -4.500 h-2z" fill="#e9eaeb"/><path d="M630 656 l2 7.500 l5.500 8.500 l-1 1 l-6.500 -5 l-6.500 5 l-1 -1 l5.500 -8.500z" fill="#e9eaeb"/><polygon points="738.16,664.26 738.16,665.74 735.77,666.57 735.36,667.54 736.47,669.82 735.42,670.87 733.14,669.76 732.17,670.17 731.34,672.56 729.86,672.56 729.03,670.17 728.06,669.76 725.78,670.87 724.73,669.82 725.84,667.54 725.43,666.57 723.04,665.74 723.04,664.26 725.43,663.43 725.84,662.46 724.73,660.18 725.78,659.13 728.06,660.24 729.03,659.83 729.86,657.44 731.34,657.44 732.17,659.83 733.14,660.24 735.42,659.13 736.47,660.18 735.36,662.46 735.77,663.43" fill="#e9eaeb"/><circle cx="730.600" cy="665" r="2.600" fill="#3b4453"/><path d="M763.500 665 h16.500 M771.700 656.800 v16.500" stroke="#e9eaeb" stroke-width="1.800"/><rect x="795" y="656.500" width="4" height="16" fill="#e9eaeb"/><rect x="799" y="657.0" width="4" height="1.600" fill="#e9eaeb"/><rect x="799" y="660.5" width="2.5" height="1.600" fill="#e9eaeb"/><rect x="799" y="664.0" width="4" height="1.600" fill="#e9eaeb"/><rect x="799" y="667.5" width="2.5" height="1.600" fill="#e9eaeb"/><rect x="799" y="671.0" width="4" height="1.600" fill="#e9eaeb"/><rect x="892" y="658" width="11.500" height="15" fill="none" stroke="#e9eaeb" stroke-width="1.200"/><rect x="892" y="657.500" width="11.500" height="2.500" fill="#e9eaeb"/><path d="M894 663.500 h1.500 M896.500 663.500 h5 M894 666.800 h1.500 M896.500 666.800 h5 M894 670 h1.500 M896.500 670 h5" stroke="#e9eaeb" stroke-width="1.100"/><path d="M924 670.500 H916 V658 H930.500 V663" fill="none" stroke="#e9eaeb" stroke-width="1.200"/><rect x="915.500" y="657.500" width="15.500" height="2.500" fill="#e9eaeb"/><rect x="925" y="668" width="7" height="5.500" fill="#e9eaeb"/><path d="M928.500 668 v-2 a2 2 0 0 1 4 0 v0.500" fill="none" stroke="#e9eaeb" stroke-width="1.100"/><rect x="957.800" y="657.500" width="6" height="6" fill="none" stroke="#e9eaeb" stroke-width="1.100"/><circle cx="969.800" cy="664" r="3" fill="none" stroke="#e9eaeb" stroke-width="1.100"/><path d="M960.500 673 l3.200 -6 l3.200 6z" fill="none" stroke="#e9eaeb" stroke-width="1.100"/><circle cx="992" cy="665" r="7.300" fill="#8fb4dc" stroke="#fff" stroke-width="1.400"/><path d="M990 669.500 L996 661" stroke="#fff" stroke-width="1.600" stroke-linecap="round"/><circle cx="989.800" cy="669.700" r="1.500" fill="#fff"/><rect x="1011.300" y="658.500" width="15.500" height="12.500" fill="none" stroke="#e9eaeb" stroke-width="1.200"/><path d="M1020 664 l4 -3.500 M1018 666 l-4 3.500" stroke="#e9eaeb" stroke-width="1.100"/><path d="M1024.800 659.800 l-3.500 0.300 l3.200 3.200z M1013.300 670.200 l3.500 -0.300 l-3.200 -3.200z" fill="#e9eaeb"/><path d="M1035.500 658.800 h16.200 M1035.500 665 h16.200 M1035.500 671.200 h16.200" stroke="#e9eaeb" stroke-width="1.800"/></svg>
<div id="bord"></div>
</body></html>
